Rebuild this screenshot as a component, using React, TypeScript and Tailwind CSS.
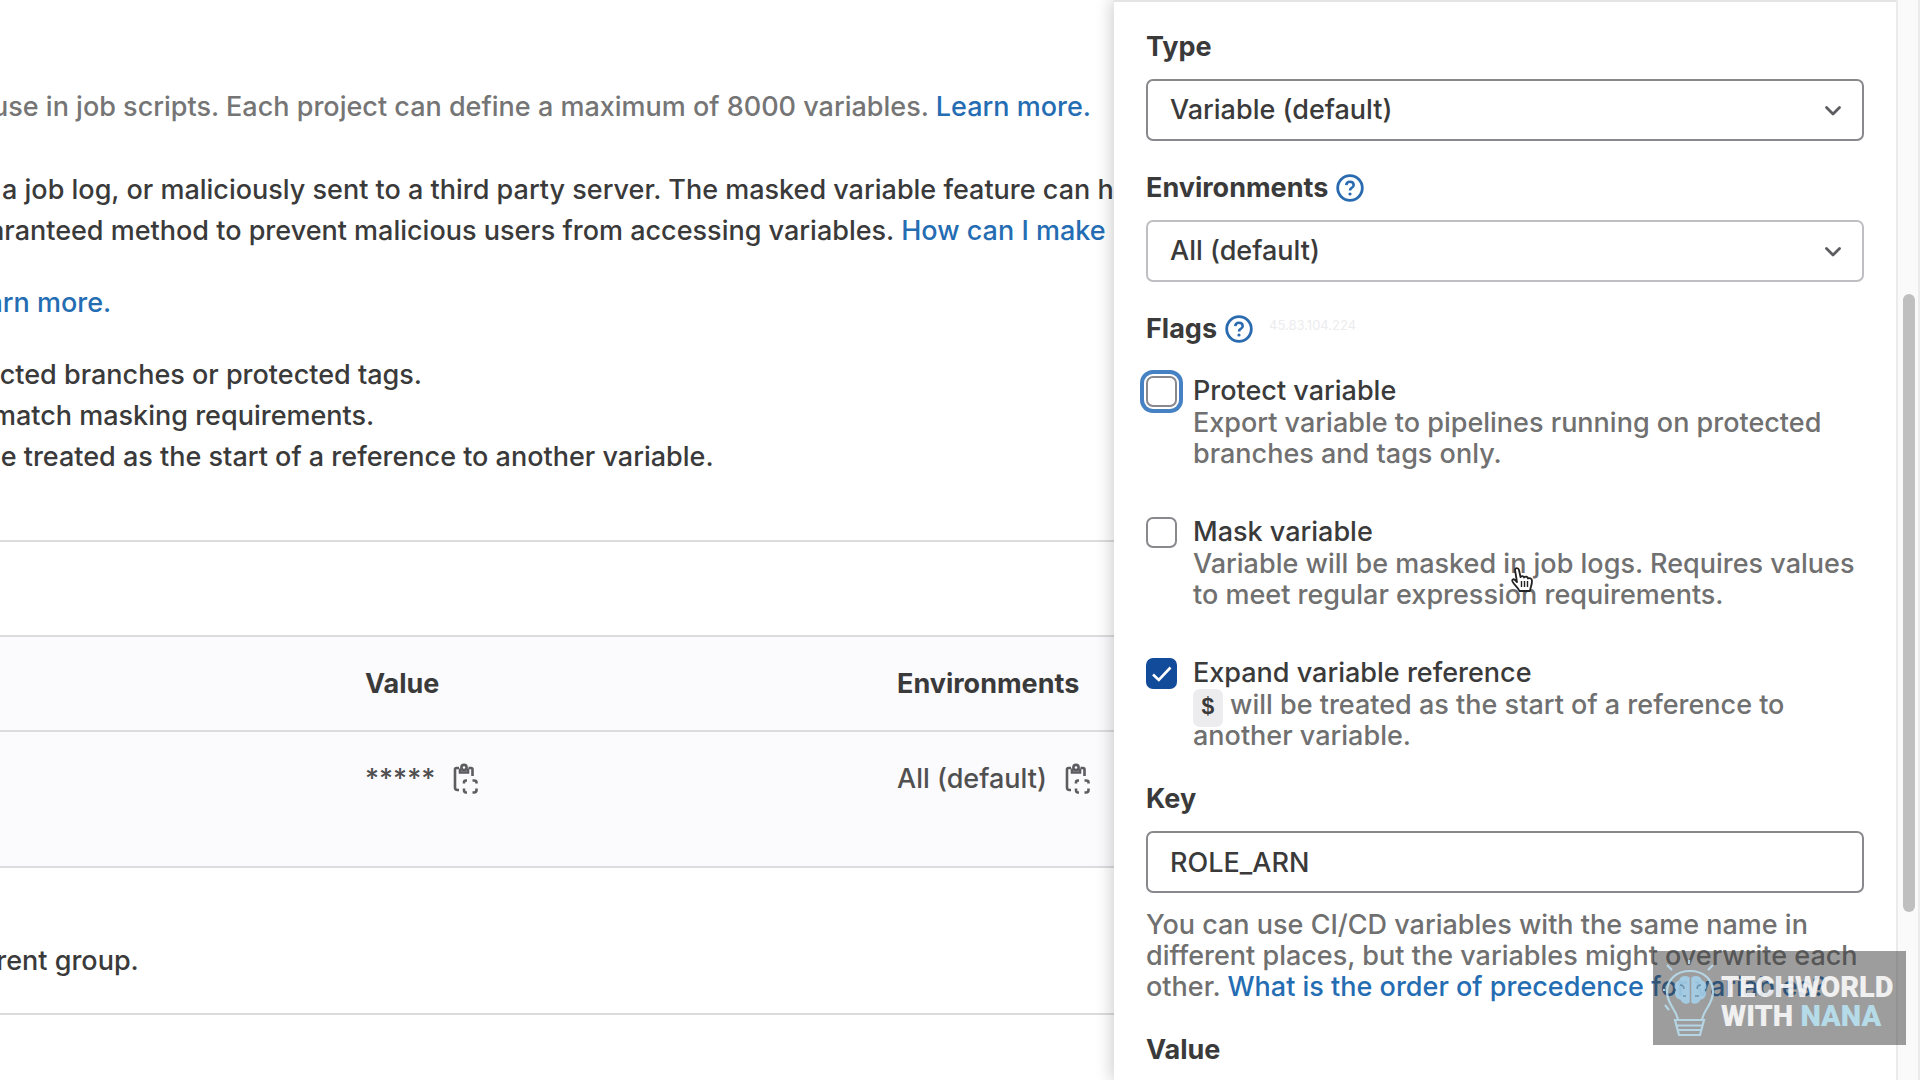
import React, { ReactNode } from "react";

function ClipboardIcon() {
  return (
    <svg viewBox="0 0 28 32" className="h-8 w-7" fill="none" stroke="#5d5c61" strokeWidth="2.600">
      <path d="M8 5H5.5Q4 5 4 6.500V24.500Q4 27 6.500 27H8" />
      <path d="M17.500 5H20Q21.500 5 21.500 6.500V13" />
      <circle cx="13" cy="4.500" r="2.600" />
      <path d="M9 5.500V9.500H17V5.500" />
      <path d="M16 17.500H15Q13 17.500 13 19.500V20.500M21.500 17.500H23Q25.500 17.500 25.500 19.500V20.500M13 25.500V27Q13 29.500 15 29.500H16M21.500 29.500H23Q25.500 29.500 25.500 27V25.500" />
    </svg>
  );
}

function HelpButton({ label }: { label: string }) {
  return (
    <button type="button" aria-label={label}>
      <svg viewBox="0 0 28 28" className="size-7" fill="none" stroke="#2a6bb0">
        <circle cx="14" cy="14" r="12.300" strokeWidth="2.800" />
        <path d="M10.300 11.200Q10.500 7.800 14 7.800T17.700 11Q17.700 12.800 15.700 13.800Q14 14.700 14 16.600" strokeWidth="2.600" />
        <circle cx="14" cy="20" r="1.600" fill="#2a6bb0" stroke="none" />
      </svg>
    </button>
  );
}

function SelectField({ id, value, border }: { id: string; value: string; border: string }) {
  return (
    <div className="relative mt-4">
      <select
        id={id}
        className={`block h-[62px] w-full appearance-none rounded-[7px] border-2 bg-white px-[22px] ${border}`}
      >
        <option>{value}</option>
      </select>
      <svg
        viewBox="0 0 18 12"
        className="pointer-events-none absolute top-[26px] right-[22px] h-3 w-[18px]"
        fill="none"
        stroke="#5d5c61"
        strokeWidth="2.800"
        strokeLinecap="round"
        strokeLinejoin="round"
      >
        <path d="M2.500 2.500L9 9L15.500 2.500" />
      </svg>
    </div>
  );
}

function CheckItem({
  id,
  label,
  checked = false,
  box,
  children,
}: {
  id: string;
  label: string;
  checked?: boolean;
  box: string;
  children: ReactNode;
}) {
  return (
    <div className="flex gap-4">
      <div className="relative mt-px size-[31px] shrink-0">
        <input
          id={id}
          type="checkbox"
          defaultChecked={checked}
          aria-describedby={`${id}-help`}
          className={`block size-full appearance-none rounded-[7px] ${box}`}
        />
        {checked && (
          <svg
            viewBox="0 0 31 31"
            className="pointer-events-none absolute inset-0"
            fill="none"
            stroke="#fff"
            strokeWidth="2.600"
          >
            <path d="M7 16.500L12.800 22L24.500 9.500" />
          </svg>
        )}
      </div>
      <div>
        <label htmlFor={id} className="block leading-8">
          {label}
        </label>
        <p id={`${id}-help`} className="leading-[31px] text-[#707070]">
          {children}
        </p>
      </div>
    </div>
  );
}

function Watermark() {
  return (
    <div className="absolute right-[14px] bottom-[35px] flex h-[94px] w-[253px] items-center bg-[#3c3c3c]/50 pl-2 font-['Roboto'] text-[29px] leading-[29px] font-black text-white/85">
      <svg viewBox="0 0 60 80" className="h-20 w-[60px] shrink-0" fill="none" stroke="#b9dcec" strokeWidth="2.200" opacity="0.9">
        <path d="M17 63C17 53 6 47 6 34C6 21 16 13 29 13S52 21 52 34C52 47 41 53 41 63" />
        <path d="M6 7L11 12M52 7L47 12M28 2V6M2 32H4M4 47L8 52" />
        <path d="M14 62H43L39 77H18ZM16 67.500H42M17 72H40" />
        <path
          d="M28 20C23 17 19 20 19 23C14 24 13 29 16 32C13 36 16 41 20 41C21 45 26 46 28 44ZM31 20C36 17 40 20 40 23C45 24 46 29 43 32C46 36 43 41 39 41C38 45 33 46 31 44Z"
          fill="#a5d0ea"
          stroke="#a5d0ea"
          strokeWidth="1.500"
        />
        <path d="M19 27Q23 27 23 31M40 27Q36 27 36 31M22 38H25M34 38H38" stroke="#6d93ab" strokeWidth="1.500" />
      </svg>
      <p className="pt-2 whitespace-nowrap">
        TECHWORLD
        <br />
        WITH <span className="text-[#b5dbe9]">NANA</span>
      </p>
    </div>
  );
}

export default function App() {
  return (
    <div className="relative flex h-screen overflow-hidden bg-white font-['Inter',sans-serif] text-[27px] font-[450] text-[#3a3a3a]">
      <main className="min-w-0 flex-1 overflow-hidden pt-[86px] leading-[41px] whitespace-nowrap">
        <p className="-ml-2 text-[#757575]">
          use in job scripts. Each project can define a maximum of 8000 variables.{" "}
          <a href="#learn" className="text-[#256db3]">
            Learn more.
          </a>
        </p>
        <p className="mt-[42px] ml-0.5">
          a job log, or maliciously sent to a third party server. The masked variable feature can help
        </p>
        <p className="-ml-11">
          guaranteed method to prevent malicious users from accessing variables.{" "}
          <a href="#secure" className="text-[#256db3]">
            How can I make
          </a>
        </p>
        <p className="mt-[31px] -ml-11">
          <a href="#more" className="text-[#256db3]">
            Learn more.
          </a>
        </p>
        <ul className="mt-[31px]">
          <li className="-ml-17">protected branches or protected tags.</li>
          <li className="-ml-2">match masking requirements.</li>
          <li className="-ml-4">be treated as the start of a reference to another variable.</li>
        </ul>
        <section className="mt-[63px] border-t-2 border-[#dcdcde]">
          <table className="mt-[93px] w-full table-fixed border-collapse bg-[#fbfafd] text-left">
            <colgroup>
              <col className="w-[341px]" />
              <col className="w-[532px]" />
              <col />
            </colgroup>
            <thead>
              <tr className="h-[95px] border-y-2 border-[#dcdcde]">
                <th aria-label="Key" />
                <th className="pl-6 font-[650]">Value</th>
                <th className="pl-6 font-[650]">Environments</th>
              </tr>
            </thead>
            <tbody>
              <tr className="h-[136px] border-b-2 border-[#dcdcde] align-top text-[#505050]">
                <td />
                <td className="pt-[26px] pl-6">
                  <div className="flex items-center gap-4">
                    <span>*****</span>
                    <button type="button" aria-label="Copy value">
                      <ClipboardIcon />
                    </button>
                  </div>
                </td>
                <td className="pt-[26px] pl-6">
                  <div className="flex items-center gap-4">
                    <span>All (default)</span>
                    <button type="button" aria-label="Copy environment">
                      <ClipboardIcon />
                    </button>
                  </div>
                </td>
              </tr>
            </tbody>
          </table>
        </section>
        <section className="border-b-2 border-[#dcdcde] pt-[72px] pb-8">
          <p className="-ml-9">parent group.</p>
        </section>
      </main>

      <aside className="z-10 flex w-[806px] shrink-0 bg-white shadow-[0_0_16px_2px_rgba(0,0,0,0.2)]">
        <form className="min-w-0 flex-1 border-t-2 border-[#e4e4e6] px-8 pt-[29px]">
          <label htmlFor="type" className="block leading-8 font-[650]">
            Type
          </label>
          <SelectField id="type" value="Variable (default)" border="border-[#89888d]" />

          <div className="mt-[31px] flex items-center gap-2 leading-8">
            <label htmlFor="env" className="font-[650]">
              Environments
            </label>
            <HelpButton label="About environments" />
          </div>
          <SelectField id="env" value="All (default)" border="border-[#bfbfc3]" />

          <div className="mt-[31px] flex items-center gap-2 leading-8">
            <h2 className="font-[650]">Flags</h2>
            <HelpButton label="About flags" />
            <span className="ml-2 self-start text-[13px] leading-6 font-normal text-[#ececee]">45.83.104.224</span>
          </div>
          <div className="mt-[30px] flex flex-col gap-[47px]">
            <CheckItem
              id="protect"
              label="Protect variable"
              box="border-2 border-[#89888d] bg-white shadow-[0_0_0_2px_#fff,0_0_0_6px_#4581c3]"
            >
              Export variable to pipelines running on protected branches and tags only.
            </CheckItem>
            <CheckItem id="mask" label="Mask variable" box="border-2 border-[#89888d] bg-white">
              Variable will be masked in job logs. Requires values to meet regular expression requirements.
            </CheckItem>
            <CheckItem id="expand" label="Expand variable reference" checked box="bg-[#134b9b]">
              <code className="rounded-[7px] bg-[#ececef] px-2 py-1.5 font-['Liberation_Mono',monospace] text-[23px] leading-none font-bold text-[#3a3a3a]">
                $
              </code>{" "}
              will be treated as the start of a reference to another variable.
            </CheckItem>
          </div>

          <label htmlFor="key" className="mt-8 block leading-8 font-[650]">
            Key
          </label>
          <input
            id="key"
            type="text"
            defaultValue="ROLE_ARN"
            className="mt-4 block h-[62px] w-full rounded-[7px] border-2 border-[#89888d] bg-white px-[22px]"
          />
          <p className="mt-4 leading-[31px] text-[#707070]">
            You can use CI/CD variables with the same name in different places, but the variables might overwrite each
            other.{" "}
            <a href="#precedence" className="text-[#256db3]">
              What is the order of precedence for variables?
            </a>
          </p>
          <h2 className="mt-8 leading-8 font-[650]">Value</h2>
        </form>
        <div className="w-6 shrink-0 border-x-2 border-[#ebebeb] bg-[#fafafa] pt-[294px] pl-[5px]">
          <div className="h-[618px] w-3 rounded-full bg-[#bfbfbf]" />
        </div>
      </aside>

      <svg viewBox="0 0 24 28" className="absolute top-[566px] left-[1510px] z-20 h-7 w-6" fill="#fff" stroke="#222" strokeWidth="1.800" strokeLinejoin="round">
        <path d="M5 4C5 1.500 8.500 1.500 9 4L10.500 11C12 9.500 13.500 10 14 11.500C15.500 10 17.500 10.500 18 12.500C20 11.500 22 12.500 22 15C22 19 20.500 21 20 25H9.500C8 21 4 19 2.500 15.500C1.500 13 4 12.500 5.500 14.500L7 16Z" />
        <path d="M11.500 15V21M14.500 15V21M17.500 15V21" strokeWidth="1.400" />
      </svg>
      <div className="pointer-events-none absolute inset-0 z-20">
        <Watermark />
      </div>
    </div>
  );
}
